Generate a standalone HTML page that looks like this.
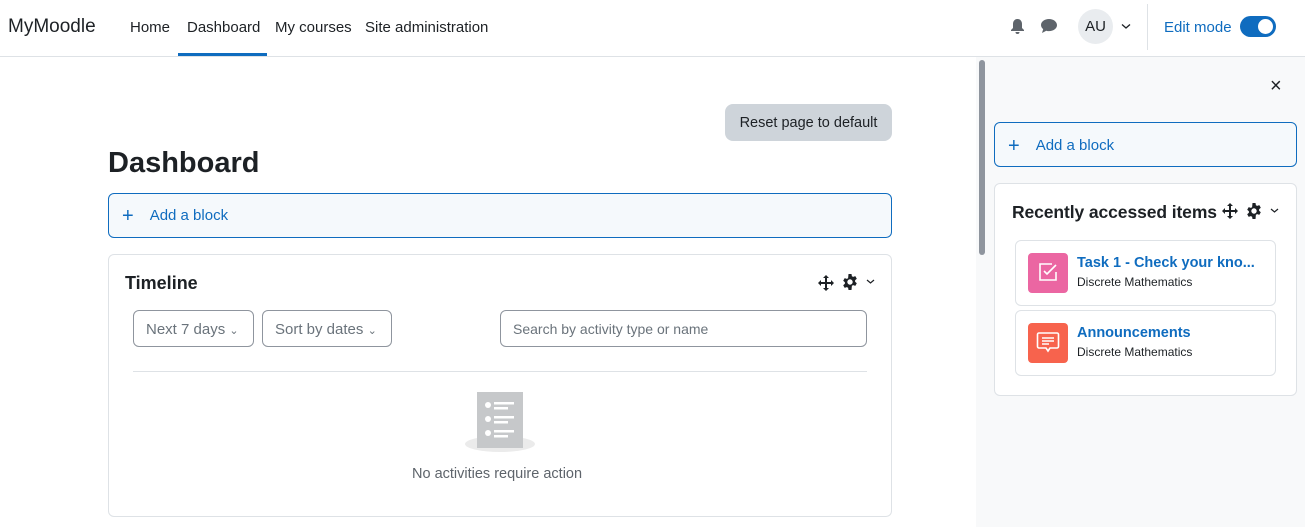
<!DOCTYPE html>
<html><head><style>
*{box-sizing:border-box;margin:0;padding:0}
body{width:1305px;height:527px;overflow:hidden;font-family:"Liberation Sans",sans-serif;color:#1d2125;background:#fff;position:relative;font-size:15px}
.nav{position:absolute;top:0;left:0;width:1305px;height:57px;border-bottom:1px solid #dee2e6;background:#fff}
.abs{position:absolute}
.link{color:#0f6cbf}
.btnsel{border:1px solid #8f959e;border-radius:6px;height:37px;position:absolute;top:310px;color:#6a737b;font-size:15px;padding:10px 12px;white-space:nowrap}
</style></head><body>
<div class="nav">
 <div class="abs" style="left:8px;top:16px;font-size:19px">MyMoodle</div>
 <div class="abs" style="left:130px;top:19px">Home</div>
 <div class="abs" style="left:187px;top:19px">Dashboard</div>
 <div class="abs" style="left:178px;top:53px;width:89px;height:3px;background:#0f6cbf"></div>
 <div class="abs" style="left:275px;top:19px">My courses</div>
 <div class="abs" style="left:365px;top:19px">Site administration</div>
 <svg class="abs" style="left:1010px;top:18px" width="15" height="17" viewBox="0 0 15 17"><path d="M7.5 1c-3 0-4.5 2.5-4.5 5v4l-2 2v1h13v-1l-2-2V6c0-2.5-1.5-5-4.5-5z M5.5 14a2 2 0 004 0z" fill="#5e646b"/></svg>
 <svg class="abs" style="left:1040px;top:18px" width="18" height="16" viewBox="0 0 18 16"><path d="M9 1C4.6 1 1 3.7 1 7c0 1.6.8 3 2.2 4.1L2 15l4.3-2.3c.9.3 1.8.4 2.7.4 4.4 0 8-2.7 8-6S13.4 1 9 1z" fill="#5e646b"/></svg>
 <div class="abs" style="left:1078px;top:9px;width:35px;height:35px;border-radius:50%;background:#e9ecef;text-align:center;line-height:35px;font-size:15px;color:#1d2125">AU</div>
 <svg class="abs" style="left:1121px;top:23px" width="10" height="7"><path d="M1 1.5l4 3.5 4-3.5" stroke="#1d2125" fill="none" stroke-width="1.3"/></svg>
 <div class="abs" style="left:1147px;top:4px;width:1px;height:46px;background:#dee2e6"></div>
 <div class="abs link" style="left:1164px;top:19px">Edit mode</div>
 <div class="abs" style="left:1240px;top:16px;width:36px;height:21px;border-radius:11px;background:#0f6cbf"><div style="position:absolute;right:3px;top:3px;width:15px;height:15px;border-radius:50%;background:#fff"></div></div>
</div>

<div class="abs" style="left:725px;top:104px;width:167px;height:37px;border-radius:8px;background:#ced4da;text-align:center;line-height:38px;font-size:14.5px">Reset page to default</div>
<div class="abs" style="left:108px;top:147px;font-size:29px;font-weight:bold">Dashboard</div>
<div class="abs" style="left:108px;top:193px;width:784px;height:45px;border:1px solid #0f6cbf;border-radius:6px;background:#f5f9fc;color:#0f6cbf;padding:13px 0 0 13px"><span style="font-size:20px;line-height:15px;vertical-align:-2px;margin-right:16px">+</span>Add a block</div>
<div class="abs" style="left:108px;top:254px;width:784px;height:263px;border:1px solid #dee2e6;border-radius:6px"></div>
<div class="abs" style="left:125px;top:273px;font-size:18px;font-weight:bold">Timeline</div>
<svg class="abs" style="left:818px;top:275px" width="16" height="16" viewBox="0 0 16 16"><path d="M8 0l3 3H9v4h4V5l3 3-3 3V9H9v4h2l-3 3-3-3h2V9H3v2L0 8l3-3v2h4V3H5z" fill="#1d2125"/></svg>
<svg class="abs" style="left:842px;top:274px" width="16" height="16" viewBox="0 0 16 16"><path d="M6.5 0h3l.4 2.2 1.3.7 2.1-.8 1.5 2.6-1.7 1.5v1.6l1.7 1.5-1.5 2.6-2.1-.8-1.3.7L9.5 16h-3l-.4-2.2-1.3-.7-2.1.8-1.5-2.6L2.9 9.8V8.2L1.2 6.7l1.5-2.6 2.1.8 1.3-.7zM8 5.3A2.7 2.7 0 108 10.7 2.7 2.7 0 108 5.3z" fill="#1d2125" fill-rule="evenodd"/></svg>
<svg class="abs" style="left:866px;top:279px" width="9" height="6"><path d="M1 1l3.5 3L8 1" stroke="#1d2125" fill="none" stroke-width="1.2"/></svg>
<div class="btnsel" style="left:133px;width:121px">Next 7 days <span style="font-size:11px">&#8964;</span></div>
<div class="btnsel" style="left:262px;width:130px">Sort by dates <span style="font-size:11px">&#8964;</span></div>
<div class="btnsel" style="left:500px;width:367px;font-size:14px;padding-top:10px">Search by activity type or name</div>
<div class="abs" style="left:133px;top:371px;width:734px;height:1px;background:#dee2e6"></div>
<div class="abs" style="left:465px;top:436px;width:70px;height:16px;border-radius:50%;background:#ebebeb"></div>
<svg class="abs" style="left:477px;top:392px" width="46" height="56" viewBox="0 0 46 56"><rect width="46" height="56" fill="#c6c8ca"/><g fill="#fff"><circle cx="11" cy="13" r="3"/><circle cx="11" cy="27" r="3"/><circle cx="11" cy="41" r="3"/><rect x="17" y="10" width="20" height="2.5"/><rect x="17" y="15" width="14" height="2.5"/><rect x="17" y="24" width="20" height="2.5"/><rect x="17" y="29" width="14" height="2.5"/><rect x="17" y="38" width="20" height="2.5"/><rect x="17" y="43" width="14" height="2.5"/></g></svg>
<div class="abs" style="left:412px;top:466px;color:#5e646b;font-size:14.5px">No activities require action</div>

<div class="abs" style="left:976px;top:57px;width:329px;height:470px;background:#f8f9fa"></div>
<div class="abs" style="left:979px;top:60px;width:6px;height:195px;border-radius:3px;background:#8f959e"></div>
<div class="abs" style="left:1270px;top:75px;font-size:20px">&#215;</div>
<div class="abs" style="left:994px;top:122px;width:303px;height:45px;border:1px solid #0f6cbf;border-radius:6px;background:#f5f9fc;color:#0f6cbf;padding:14px 0 0 13px"><span style="font-size:20px;vertical-align:-2px;margin-right:16px;line-height:15px">+</span>Add a block</div>
<div class="abs" style="left:994px;top:183px;width:303px;height:213px;border:1px solid #dee2e6;border-radius:6px;background:#fff"></div>
<div class="abs" style="left:1012px;top:202px;font-size:17.5px;font-weight:bold;letter-spacing:-0.1px">Recently accessed items</div>
<svg class="abs" style="left:1222px;top:203px" width="16" height="16" viewBox="0 0 16 16"><path d="M8 0l3 3H9v4h4V5l3 3-3 3V9H9v4h2l-3 3-3-3h2V9H3v2L0 8l3-3v2h4V3H5z" fill="#1d2125"/></svg>
<svg class="abs" style="left:1246px;top:203px" width="16" height="16" viewBox="0 0 16 16"><path d="M6.5 0h3l.4 2.2 1.3.7 2.1-.8 1.5 2.6-1.7 1.5v1.6l1.7 1.5-1.5 2.6-2.1-.8-1.3.7L9.5 16h-3l-.4-2.2-1.3-.7-2.1.8-1.5-2.6L2.9 9.8V8.2L1.2 6.7l1.5-2.6 2.1.8 1.3-.7zM8 5.3A2.7 2.7 0 108 10.7 2.7 2.7 0 108 5.3z" fill="#1d2125" fill-rule="evenodd"/></svg>
<svg class="abs" style="left:1270px;top:208px" width="9" height="6"><path d="M1 1l3.5 3L8 1" stroke="#1d2125" fill="none" stroke-width="1.2"/></svg>

<div class="abs" style="left:1015px;top:240px;width:261px;height:66px;border:1px solid #dee2e6;border-radius:6px"></div>
<div class="abs" style="left:1028px;top:253px;width:40px;height:40px;border-radius:4px;background:#eb66a2"></div>
<svg class="abs" style="left:1037px;top:262px" width="22" height="22" viewBox="0 0 22 22"><path d="M15 2H3v16h16v-8" stroke="#fff" stroke-width="1.6" fill="none"/><path d="M7 9l3 3 9-9" stroke="#fff" stroke-width="1.6" fill="none"/></svg>
<div class="abs link" style="left:1077px;top:255px;font-weight:bold;font-size:14.5px">Task 1 - Check your kno...</div>
<div class="abs" style="left:1077px;top:275px;font-size:12px">Discrete Mathematics</div>

<div class="abs" style="left:1015px;top:310px;width:261px;height:66px;border:1px solid #dee2e6;border-radius:6px"></div>
<div class="abs" style="left:1028px;top:323px;width:40px;height:40px;border-radius:4px;background:#f7634d"></div>
<svg class="abs" style="left:1035px;top:330px" width="26" height="26" viewBox="0 0 26 26"><path d="M4 3h18a1.5 1.5 0 011.5 1.5v12A1.5 1.5 0 0122 18h-7l-2 3-2-3H4a1.5 1.5 0 01-1.5-1.5v-12A1.5 1.5 0 014 3z" stroke="#fff" stroke-width="1.6" fill="none"/><path d="M7 8h12M7 11h12M7 14h7" stroke="#fff" stroke-width="1.4"/></svg>
<div class="abs link" style="left:1077px;top:325px;font-weight:bold;font-size:14.5px">Announcements</div>
<div class="abs" style="left:1077px;top:345px;font-size:12px">Discrete Mathematics</div>
</body></html>
